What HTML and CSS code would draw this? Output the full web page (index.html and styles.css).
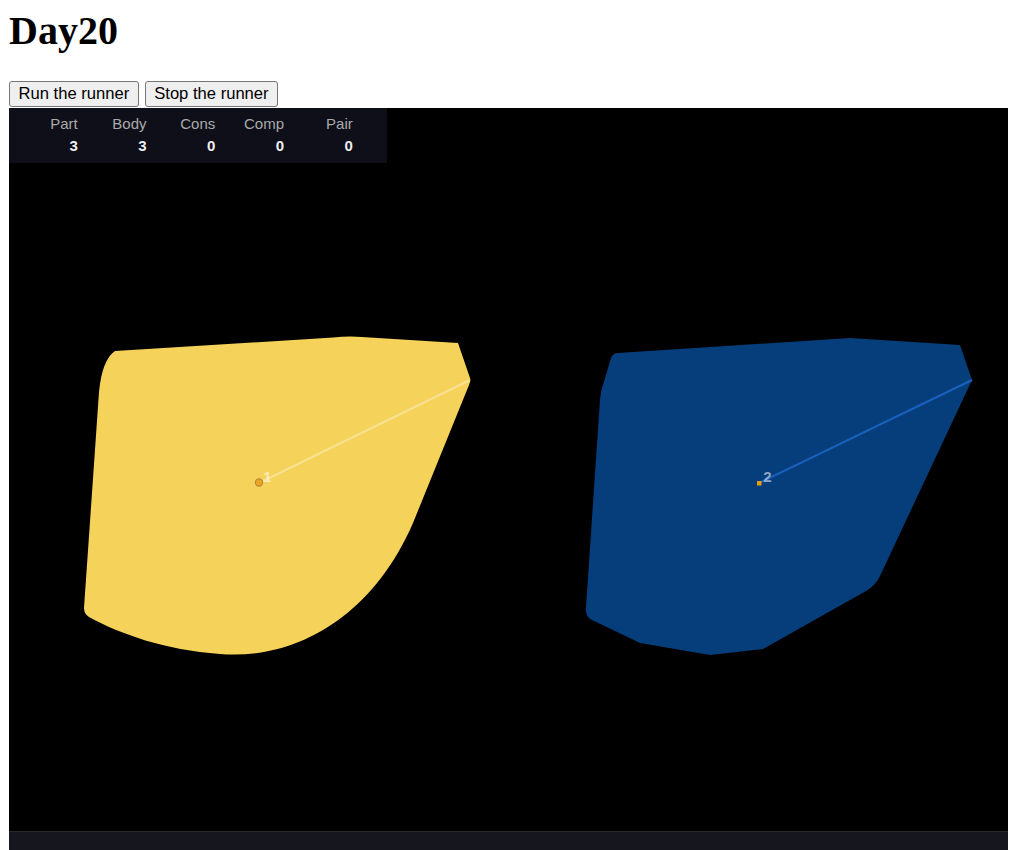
FILE: index.html
```html
<!DOCTYPE html>
<html lang="en">
<head>
<meta charset="utf-8">
<title>Day20</title>
<link rel="stylesheet" href="styles.css">
</head>
<body>
<h1 class="title">Day20</h1>
<div class="controls">
  <button class="btn">Run the runner</button>
  <button class="btn">Stop the runner</button>
</div>
<div class="stage">
  <svg class="world" viewBox="9 108 999 750" width="999" height="750" xmlns="http://www.w3.org/2000/svg">
    <rect x="9" y="108" width="999" height="750" fill="#000"/>
    <path class="body-yellow" d="M 115 351 L 333 337.5 Q 348 336 362 337 L 458 343 L 470 378 Q 471 381 469 385 L 413 523 C 370 622 290 660 220 654 C 165 650 120 634 89 617 Q 84 614 84 608 L 99 392 Q 102 360 115 351 Z"/>
    <line x1="259" y1="483" x2="470" y2="380" class="ind-yellow"/>
    <circle cx="259" cy="482.5" r="3.6" class="dot-yellow"/>
    <text x="271.5" y="481.7" text-anchor="end" class="bid">1</text>

    <path class="body-blue" d="M 618 353 L 850 338 L 960 345 L 972 380 L 880 576 Q 875 586 866 591 L 763 649 L 710 655 L 640 643 L 590 619 Q 585 615 586 607 L 600 400 Q 601 390 603 385 L 611 358 Q 613 353 618 353 Z"/>
    <line x1="759" y1="483" x2="972" y2="380" class="ind-blue"/>
    <rect x="757" y="481" width="4.5" height="4.5" class="dot-blue"/>
    <text x="771.5" y="481.7" text-anchor="end" class="bid">2</text>

    <rect x="9" y="831" width="999" height="30" class="ground"/>
    <line x1="9" y1="831.5" x2="1008" y2="831.5" class="ground-edge"/>
  </svg>
  <div class="stats">
    <div class="stat"><span class="stat-label">Part</span><span class="stat-value">3</span></div>
    <div class="stat"><span class="stat-label">Body</span><span class="stat-value">3</span></div>
    <div class="stat"><span class="stat-label">Cons</span><span class="stat-value">0</span></div>
    <div class="stat"><span class="stat-label">Comp</span><span class="stat-value">0</span></div>
    <div class="stat"><span class="stat-label">Pair</span><span class="stat-value">0</span></div>
  </div>
</div>
</body>
</html>
```
FILE: styles.css
```css
html, body {
  background: #fff;
}

body {
  margin: 0;
  padding: 0 0 0 9px;
  font-family: "Liberation Serif", "Times New Roman", serif;
  color: #000;
}

.title {
  margin: 8px 0 0;
  font-size: 40px;
  line-height: 46px;
  font-weight: bold;
}

.controls {
  display: flex;
  gap: 6px;
  margin-top: 27px;
  margin-bottom: 1px;
  height: 26px;
}

.btn {
  font-family: "Liberation Sans", Arial, sans-serif;
  font-size: 16.6px;
  height: 26px;
  padding: 0 8.5px;
  border: 1px solid #767676;
  border-radius: 3px;
  background: #efefef;
  color: #000;
  line-height: 24px;
}

.stage {
  position: relative;
  width: 999px;
  height: 750px;
  background: #000;
}

.world {
  display: block;
}

.body-yellow {
  fill: #f5d259;
}

.body-blue {
  fill: #063e7b;
}

.ind-yellow {
  stroke: rgba(255, 255, 255, 0.35);
  stroke-width: 2;
}

.ind-blue {
  stroke: #1a60bd;
  stroke-width: 2;
}

.dot-yellow {
  fill: #eda523;
  stroke: #b98a35;
  stroke-width: 1.2;
}

.dot-blue {
  fill: rgba(255, 165, 0, 0.9);
}

.bid {
  font-family: "Liberation Sans", Arial, sans-serif;
  font-size: 15px;
  font-weight: bold;
  fill: rgba(255, 255, 255, 0.55);
}

.ground {
  fill: #16161f;
}

.ground-edge {
  stroke: #2a2a30;
  stroke-width: 1;
}

.stats {
  position: absolute;
  left: 0;
  top: 0;
  width: 378px;
  height: 55px;
  background: #0e0f19;
  display: grid;
  grid-template-columns: repeat(5, 68.75px);
  font-family: "Liberation Sans", Arial, sans-serif;
  font-size: 15px;
  line-height: 15px;
}

.stat {
  display: flex;
  flex-direction: column;
  align-items: flex-end;
  padding-top: 8px;
  gap: 7px;
}

.stat-label {
  color: #aaa;
}

.stat-value {
  color: #eee;
  font-weight: bold;
}
```
